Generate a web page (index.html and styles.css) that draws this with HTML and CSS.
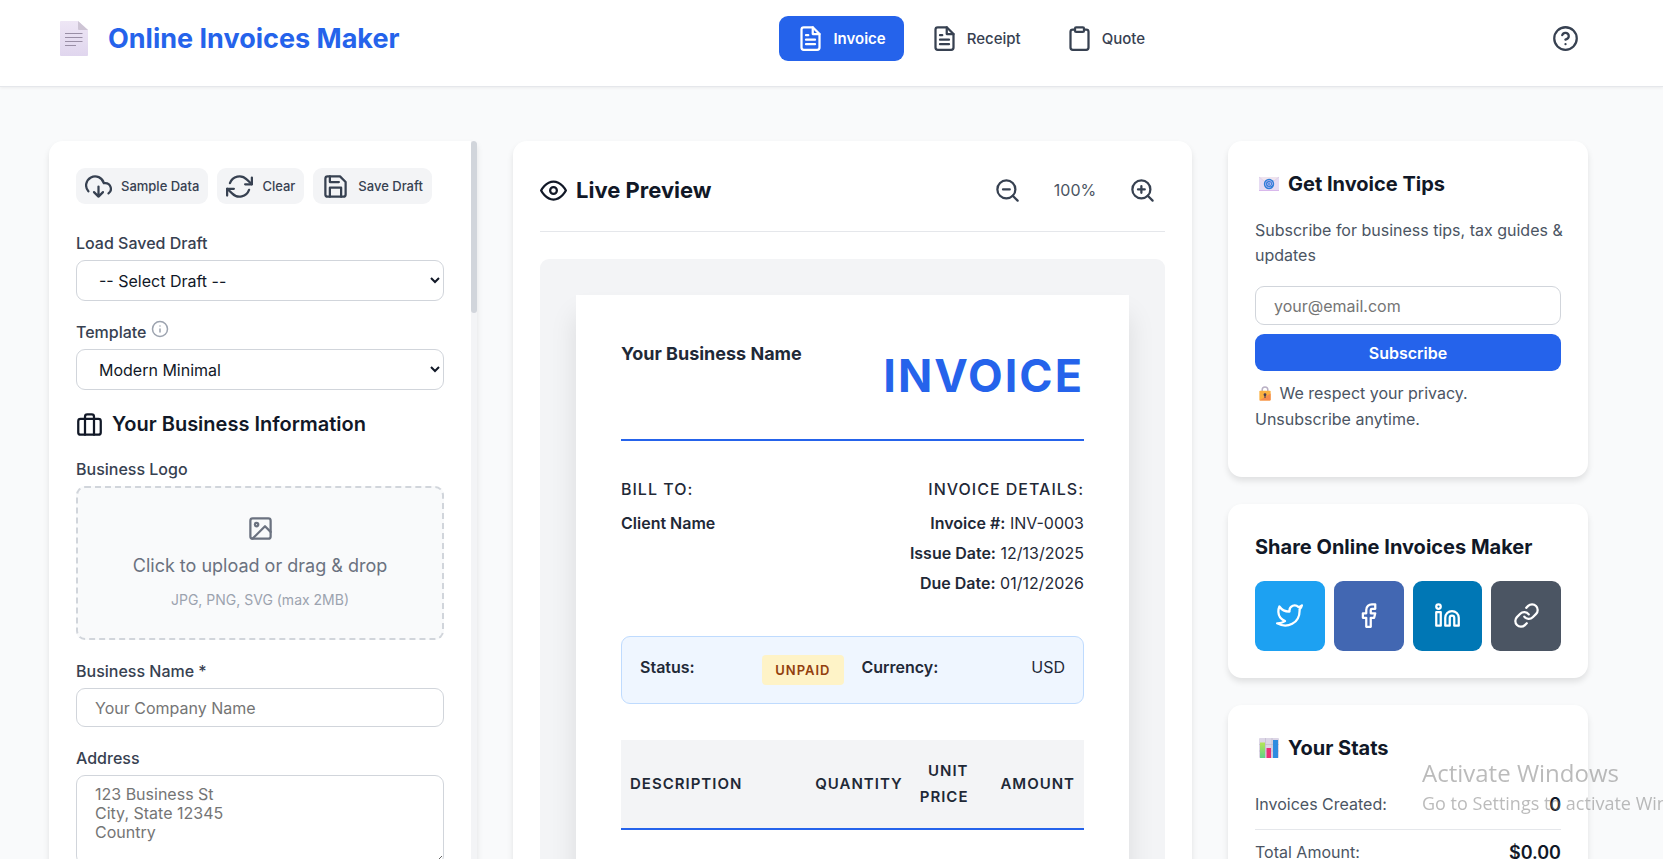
FILE: index.html
```html
<!DOCTYPE html>
<html lang="en">
<head>
    <meta charset="UTF-8">
    <meta name="viewport" content="width=device-width, initial-scale=1.0">
    <title>Online Invoices Maker</title>
    <link rel="stylesheet" href="styles.css">
</head>
<body>
    <header class="header">
        <div class="header-inner">
            <a class="logo" href="#">
                <svg class="logo-icon" viewBox="0 0 28 35" aria-hidden="true">
                    <defs>
                        <linearGradient id="page" x1="0" y1="0" x2="0" y2="1">
                            <stop offset="0" stop-color="#eee6f5"/>
                            <stop offset="1" stop-color="#e0d6ee"/>
                        </linearGradient>
                    </defs>
                    <path d="M1 0h17l10 9v25a1 1 0 0 1-1 1H1a1 1 0 0 1-1-1V1a1 1 0 0 1 1-1z" fill="url(#page)"/>
                    <path d="M18 0l10 9h-9a1 1 0 0 1-1-1z" fill="#cdc4d4"/>
                    <path d="M5 12.5h17.500M5 16.500h17.500M5 20.500h17.500M5 24.500h11" stroke="#9a8fa6" stroke-width="1.200" fill="none"/>
                </svg>
                <span>Online Invoices Maker</span>
            </a>
            <nav class="nav">
                <button class="nav-btn active" type="button">
                    <svg class="icon" viewBox="0 0 24 24"><path d="M14 2H6a2 2 0 0 0-2 2v16a2 2 0 0 0 2 2h12a2 2 0 0 0 2-2V8z"/><path d="M14 2v6h6M16 13H8M16 17H8M10 9H8"/></svg>
                    Invoice
                </button>
                <button class="nav-btn" type="button">
                    <svg class="icon" viewBox="0 0 24 24"><path d="M14 2H6a2 2 0 0 0-2 2v16a2 2 0 0 0 2 2h12a2 2 0 0 0 2-2V8z"/><path d="M14 2v6h6M16 13H8M16 17H8M10 9H8"/></svg>
                    Receipt
                </button>
                <button class="nav-btn" type="button">
                    <svg class="icon" viewBox="0 0 24 24"><path d="M16 4h2a2 2 0 0 1 2 2v14a2 2 0 0 1-2 2H6a2 2 0 0 1-2-2V6a2 2 0 0 1 2-2h2"/><rect x="8" y="2" width="8" height="4" rx="1"/></svg>
                    Quote
                </button>
            </nav>
            <button class="icon-btn" type="button" aria-label="Help">
                <svg class="icon" viewBox="0 0 24 24"><circle cx="12" cy="12" r="10"/><path d="M9.090 9a3 3 0 0 1 5.830 1c0 2-3 3-3 3M12 17h.01"/></svg>
            </button>
        </div>
    </header>

    <main class="layout">
        <!-- Form -->
        <section class="panel form-panel">
            <div class="form-scroll">
                <div class="actions">
                    <button class="btn-small" type="button">
                        <svg class="icon" viewBox="0 0 24 24"><path d="M8 17l4 4 4-4M12 12v9"/><path d="M20.880 18.090A5 5 0 0 0 18 9h-1.260A8 8 0 1 0 3 16.290"/></svg>
                        Sample Data
                    </button>
                    <button class="btn-small" type="button">
                        <svg class="icon" viewBox="0 0 24 24"><path d="M23 4v6h-6M1 20v-6h6"/><path d="M3.510 9a9 9 0 0 1 14.850-3.360L23 10M1 14l4.640 4.360A9 9 0 0 0 20.490 15"/></svg>
                        Clear
                    </button>
                    <button class="btn-small" type="button">
                        <svg class="icon" viewBox="0 0 24 24"><path d="M19 21H5a2 2 0 0 1-2-2V5a2 2 0 0 1 2-2h11l5 5v11a2 2 0 0 1-2 2z"/><path d="M17 21v-8H7v8M7 3v5h8"/></svg>
                        Save Draft
                    </button>
                </div>

                <div class="form-group">
                    <label for="draft">Load Saved Draft</label>
                    <select id="draft"><option>-- Select Draft --</option></select>
                </div>
                <div class="form-group">
                    <label for="template">Template
                        <svg class="info-icon" viewBox="0 0 24 24"><circle cx="12" cy="12" r="10"/><path d="M12 16v-4M12 8h.01"/></svg>
                    </label>
                    <select id="template"><option>Modern Minimal</option></select>
                </div>

                <h2 class="section-title">
                    <svg class="icon" viewBox="0 0 24 24"><rect x="2" y="7" width="20" height="14" rx="2"/><path d="M16 21V5a2 2 0 0 0-2-2h-4a2 2 0 0 0-2 2v16"/></svg>
                    Your Business Information
                </h2>

                <div class="form-group">
                    <label for="logo">Business Logo</label>
                    <div class="upload">
                        <input class="upload-input" type="file" id="logo" accept="image/*">
                        <svg class="icon" viewBox="0 0 24 24"><rect x="3" y="3" width="18" height="18" rx="2"/><circle cx="8.500" cy="8.500" r="1.500"/><path d="M21 15l-5-5L5 21"/></svg>
                        <p class="upload-text">Click to upload or drag &amp; drop</p>
                        <span class="upload-hint">JPG, PNG, SVG (max 2MB)</span>
                    </div>
                </div>
                <div class="form-group">
                    <label for="name">Business Name *</label>
                    <input type="text" id="name" placeholder="Your Company Name">
                </div>
                <div class="form-group">
                    <label for="address">Address</label>
                    <textarea id="address" placeholder="123 Business St&#10;City, State 12345&#10;Country"></textarea>
                </div>
            </div>
            <div class="scroll-track"><div class="scroll-thumb"></div></div>
        </section>

        <!-- Preview -->
        <section class="panel preview-panel">
            <div class="preview-header">
                <h2 class="preview-title">
                    <svg class="icon" viewBox="0 0 24 24"><path d="M1 12s4-8 11-8 11 8 11 8-4 8-11 8-11-8-11-8z"/><circle cx="12" cy="12" r="3"/></svg>
                    Live Preview
                </h2>
                <div class="zoom-controls">
                    <button class="icon-btn" type="button" aria-label="Zoom out">
                        <svg class="icon" viewBox="0 0 24 24"><circle cx="11" cy="11" r="8"/><path d="M21 21l-4.350-4.350M8 11h6"/></svg>
                    </button>
                    <span class="zoom-level">100%</span>
                    <button class="icon-btn" type="button" aria-label="Zoom in">
                        <svg class="icon" viewBox="0 0 24 24"><circle cx="11" cy="11" r="8"/><path d="M21 21l-4.350-4.350M11 8v6M8 11h6"/></svg>
                    </button>
                </div>
            </div>
            <div class="preview-area">
                <article class="invoice">
                    <div class="invoice-head">
                        <h3 class="business-name">Your Business Name</h3>
                        <div class="doc-title">INVOICE</div>
                    </div>
                    <div class="invoice-meta">
                        <div>
                            <h4>BILL TO:</h4>
                            <p><strong>Client Name</strong></p>
                        </div>
                        <div class="details">
                            <h4>INVOICE DETAILS:</h4>
                            <p><strong>Invoice #:</strong> INV-0003</p>
                            <p><strong>Issue Date:</strong> 12/13/2025</p>
                            <p><strong>Due Date:</strong> 01/12/2026</p>
                        </div>
                    </div>
                    <div class="status-box">
                        <div class="status-item"><strong>Status:</strong><span class="badge">UNPAID</span></div>
                        <div class="status-item"><strong>Currency:</strong><span>USD</span></div>
                    </div>
                    <table class="items">
                        <thead>
                            <tr>
                                <th class="col-desc">DESCRIPTION</th>
                                <th class="col-qty">QUANTITY</th>
                                <th class="col-price">UNIT PRICE</th>
                                <th class="col-amount">AMOUNT</th>
                            </tr>
                        </thead>
                    </table>
                </article>
            </div>
        </section>

        <!-- Sidebar -->
        <aside class="sidebar">
            <section class="panel card newsletter">
                <h3 class="card-title">
                    <svg class="emoji" viewBox="0 0 20 20" aria-hidden="true">
                        <rect x="0" y="3" width="20" height="14" fill="#e6dcf3"/>
                        <path d="M0 3l10 8 10-8" fill="#efe4ee" stroke="#d7c8e4" stroke-width=".6"/>
                        <path d="M0 17h20v-1H0z" fill="#d9b8ec"/>
                        <circle cx="10" cy="10" r="5.200" fill="#2f7fd8"/>
                        <circle cx="10" cy="10" r="1.400" fill="none" stroke="#b9b6f0" stroke-width=".9"/>
                        <path d="M11.500 8.500v2c0 1.500 2 1.200 2-.5a3.500 3.500 0 1 0-1.700 3" fill="none" stroke="#b9b6f0" stroke-width=".9"/>
                    </svg>
                    Get Invoice Tips
                </h3>
                <p class="card-text">Subscribe for business tips, tax guides &amp;<br>updates</p>
                <form class="newsletter-form">
                    <input type="email" placeholder="your@email.com" aria-label="Email">
                    <button class="btn-primary" type="button">Subscribe</button>
                </form>
                <p class="privacy">
                    <svg class="emoji-small" viewBox="0 0 12 16" aria-hidden="true">
                        <path d="M3 6V4a3 3 0 0 1 6 0v2" fill="none" stroke="#b9b0c4" stroke-width="1.600"/>
                        <rect x="0" y="5" width="12" height="10.500" rx=".8" fill="#fbb040"/>
                        <path d="M0 15.500L12 8v6.700a.8.8 0 0 1-.8.8z" fill="#f68b4e"/>
                        <circle cx="6" cy="9.300" r="1.500" fill="#4a3b52"/>
                        <path d="M5.400 9.500h1.200v3.300H5.400z" fill="#4a3b52"/>
                    </svg>
                    We respect your privacy. Unsubscribe anytime.
                </p>
            </section>

            <section class="panel card">
                <h3 class="card-title">Share Online Invoices Maker</h3>
                <div class="share">
                    <button class="share-btn twitter" type="button" aria-label="Twitter">
                        <svg class="icon" viewBox="0 0 24 24"><path d="M23 3a10.900 10.900 0 0 1-3.140 1.530 4.480 4.480 0 0 0-7.860 3v1A10.660 10.660 0 0 1 3 4s-4 9 5 13a11.640 11.640 0 0 1-7 2c9 5 20 0 20-11.500a4.500 4.500 0 0 0-.08-.83A7.720 7.720 0 0 0 23 3z"/></svg>
                    </button>
                    <button class="share-btn facebook" type="button" aria-label="Facebook">
                        <svg class="icon" viewBox="0 0 24 24"><path d="M18 2h-3a5 5 0 0 0-5 5v3H7v4h3v8h4v-8h3l1-4h-4V7a1 1 0 0 1 1-1h3z"/></svg>
                    </button>
                    <button class="share-btn linkedin" type="button" aria-label="LinkedIn">
                        <svg class="icon" viewBox="0 0 24 24"><path d="M16 8a6 6 0 0 1 6 6v7h-4v-7a2 2 0 0 0-4 0v7h-4v-7a6 6 0 0 1 6-6z"/><rect x="2" y="9" width="4" height="12"/><circle cx="4" cy="4" r="2"/></svg>
                    </button>
                    <button class="share-btn copy" type="button" aria-label="Copy link">
                        <svg class="icon" viewBox="0 0 24 24"><path d="M10 13a5 5 0 0 0 7.540.54l3-3a5 5 0 0 0-7.070-7.070l-1.720 1.710"/><path d="M14 11a5 5 0 0 0-7.540-.54l-3 3a5 5 0 0 0 7.070 7.070l1.710-1.710"/></svg>
                    </button>
                </div>
            </section>

            <section class="panel card stats">
                <h3 class="card-title">
                    <svg class="emoji" viewBox="0 0 20 20" aria-hidden="true">
                        <defs>
                            <linearGradient id="green" x1="0" y1="0" x2="0" y2="1">
                                <stop offset="0" stop-color="#b5e655"/>
                                <stop offset="1" stop-color="#5fd08a"/>
                            </linearGradient>
                        </defs>
                        <rect width="20" height="20" rx="1" fill="#dcd6e6"/>
                        <path d="M6.500 0v20M13 0v20M0 6.500h20M0 13h20" stroke="#bdb5ca" stroke-width=".6"/>
                        <rect x="1" y="4.500" width="5" height="15.500" fill="url(#green)"/>
                        <rect x="7.500" y="10" width="4.500" height="10" fill="#ea2f74"/>
                        <rect x="14" y="2" width="5" height="18" fill="#2f8be0"/>
                    </svg>
                    Your Stats
                </h3>
                <dl class="stat-list">
                    <div class="stat"><dt>Invoices Created:</dt><dd>0</dd></div>
                    <div class="stat"><dt>Total Amount:</dt><dd>$0.00</dd></div>
                </dl>
            </section>
        </aside>
    </main>

    <div class="watermark">
        <div class="watermark-title">Activate Windows</div>
        <div class="watermark-text">Go to Settings to activate Windows.</div>
    </div>
</body>
</html>
```

FILE: styles.css
```css
* {
    box-sizing: border-box;
    margin: 0;
    padding: 0;
}
body {
    background: #f9fafb;
    color: #111827;
    font-family: 'Inter', sans-serif;
    font-size: 18px;
    line-height: 1.6;
    height: 100vh;
    overflow: hidden;
}
button, input, select, textarea {
    font-family: inherit;
    font-size: 16px;
}
button {
    border: none;
    background: none;
    cursor: pointer;
}
.icon {
    width: 27px;
    height: 27px;
    flex-shrink: 0;
    fill: none;
    stroke: currentColor;
    stroke-width: 2;
    stroke-linecap: round;
    stroke-linejoin: round;
}

/* Header */
.header {
    background: #ffffff;
    border-bottom: 1px solid #e5e7eb;
    box-shadow: 0 1px 3px rgba(0, 0, 0, 0.06);
    padding: 16px 75px 25px 49px;
}
.header-inner {
    display: flex;
    align-items: center;
    justify-content: space-between;
}
.logo {
    display: flex;
    align-items: center;
    gap: 20px;
    padding-left: 11px;
    color: #2563eb;
    font-size: 27px;
    font-weight: 700;
    line-height: 44px;
    text-decoration: none;
}
.logo-icon {
    width: 28px;
    height: 35px;
}
.nav {
    display: flex;
    gap: 9px;
}
.nav-btn {
    display: flex;
    align-items: center;
    gap: 9px;
    padding: 9px 18px;
    border-radius: 9px;
    color: #374151;
    font-size: 15px;
    font-weight: 500;
}
.nav-btn.active {
    background: #2563eb;
    color: #ffffff;
    font-weight: 600;
}
.icon-btn {
    display: flex;
    padding: 9px;
    color: #374151;
}

/* Layout */
.layout {
    display: grid;
    grid-template-columns: 428px minmax(0, 1fr) 360px;
    gap: 36px;
    align-items: start;
    padding: 54px 75px 54px 49px;
}
.panel {
    background: #ffffff;
    border-radius: 14px;
    box-shadow: 0 4px 6px rgba(0, 0, 0, 0.1);
    padding: 27px;
}

/* Form */
.form-panel {
    display: flex;
    padding: 0;
    height: calc(100vh - 100px);
    border-radius: 14px 3px 3px 14px;
    overflow: hidden;
}
.form-scroll {
    flex: 1;
    min-width: 0;
    padding: 27px;
    overflow: hidden;
}
.scroll-track {
    width: 6px;
    background: #f3f4f6;
}
.scroll-thumb {
    height: 172px;
    background: #d1d5db;
    border-radius: 3px;
}
.actions {
    display: flex;
    gap: 9px;
    margin-bottom: 26px;
}
.btn-small {
    display: flex;
    align-items: center;
    gap: 9px;
    height: 36px;
    padding: 0 9px;
    background: #f3f4f6;
    border-radius: 9px;
    color: #374151;
    font-size: 13px;
    font-weight: 500;
    white-space: nowrap;
}
.form-group {
    margin-bottom: 18px;
}
.form-group label {
    display: block;
    margin-bottom: 4px;
    color: #374151;
    font-size: 16px;
    font-weight: 500;
    line-height: 26px;
}
.info-icon {
    width: 18px;
    height: 18px;
    fill: none;
    stroke: #9ca3af;
    stroke-width: 2;
    stroke-linecap: round;
}
input, select, textarea {
    display: block;
    width: 100%;
    padding: 9px 18px;
    background: #ffffff;
    border: 1px solid #d1d5db;
    border-radius: 9px;
    color: #111827;
}
select {
    height: 41px;
}
input {
    height: 39px;
}
textarea {
    height: 90px;
    line-height: 19px;
    resize: vertical;
}
.section-title {
    display: flex;
    align-items: center;
    gap: 9px;
    margin-bottom: 16px;
    font-size: 20px;
    font-weight: 600;
    line-height: 32px;
}
.upload {
    position: relative;
    display: flex;
    flex-direction: column;
    align-items: center;
    padding: 27px;
    background: #f9fafb;
    border: 2px dashed #d1d5db;
    border-radius: 9px;
    color: #6b7280;
}
.upload-input {
    position: absolute;
    inset: 0;
    height: 100%;
    opacity: 0;
    cursor: pointer;
}
.upload-text {
    margin: 9px 0;
    line-height: 29px;
}
.upload-hint {
    color: #9ca3af;
    font-size: 14px;
    line-height: 22px;
}

/* Preview */
.preview-panel {
    padding-bottom: 60px;
}
.preview-header {
    display: flex;
    align-items: center;
    justify-content: space-between;
    padding-bottom: 18px;
    margin-bottom: 27px;
    border-bottom: 1px solid #e5e7eb;
}
.preview-title {
    display: flex;
    align-items: center;
    gap: 9px;
    font-size: 22px;
    font-weight: 700;
}
.zoom-controls {
    display: flex;
    align-items: center;
    gap: 9px;
}
.zoom-level {
    min-width: 72px;
    color: #4b5563;
    font-size: 16px;
    text-align: center;
}
.preview-area {
    padding: 36px;
    background: #f3f4f6;
    border-radius: 9px;
}
.invoice {
    min-height: 900px;
    padding: 45px;
    background: #ffffff;
    box-shadow: 0 20px 25px rgba(0, 0, 0, 0.1);
    color: #1f2937;
    font-size: 16px;
}
.invoice-head {
    display: flex;
    align-items: flex-start;
    justify-content: space-between;
    padding-bottom: 27px;
    margin-bottom: 36px;
    border-bottom: 2px solid #2563eb;
}
.business-name {
    font-size: 18px;
    font-weight: 700;
}
.doc-title {
    color: #2563eb;
    font-size: 45px;
    font-weight: 700;
    letter-spacing: 2px;
}
.invoice-meta {
    display: flex;
    justify-content: space-between;
    margin-bottom: 36px;
}
.invoice-meta h4 {
    margin-bottom: 8px;
    font-size: 16px;
    font-weight: 500;
    letter-spacing: 1px;
    line-height: 25px;
}
.invoice-meta p {
    margin-bottom: 4px;
    line-height: 26px;
}
.invoice strong {
    font-weight: 600;
}
.details {
    text-align: right;
}
.status-box {
    display: grid;
    grid-template-columns: 1fr 1fr;
    gap: 18px;
    padding: 18px;
    margin-bottom: 36px;
    background: #eff6ff;
    border: 1px solid #bfdbfe;
    border-radius: 9px;
}
.status-item {
    display: flex;
    align-items: flex-start;
    justify-content: space-between;
    line-height: 25px;
}
.badge {
    padding: 4px 13px;
    background: #fef3c7;
    border-radius: 4px;
    color: #92400e;
    font-size: 13px;
    font-weight: 600;
    letter-spacing: 1px;
    line-height: 22px;
}
.items {
    width: 100%;
    border-collapse: collapse;
    table-layout: fixed;
}
.items thead {
    background: #f3f4f6;
    border-bottom: 2px solid #2563eb;
}
.items th {
    padding: 18px 9px;
    font-size: 15px;
    font-weight: 600;
    letter-spacing: 1px;
    line-height: 26px;
    text-align: right;
}
.items .col-desc {
    width: 40%;
    text-align: left;
}
.items .col-qty {
    width: 22%;
    text-align: center;
}
.items .col-price {
    width: 15%;
}

/* Sidebar */
.sidebar {
    display: flex;
    flex-direction: column;
    gap: 27px;
}
.card-title {
    display: flex;
    align-items: center;
    gap: 9px;
    margin-bottom: 18px;
    font-size: 20px;
    font-weight: 700;
    line-height: 32px;
}
.emoji {
    width: 20px;
    height: 20px;
    margin-left: 4px;
}
.emoji-small {
    width: 12px;
    height: 15px;
    margin: 0 4px;
    vertical-align: -2px;
}
.card-text, .privacy {
    color: #4b5563;
    font-size: 16px;
}
.card-text {
    margin-bottom: 18px;
    line-height: 25px;
    white-space: nowrap;
}
.privacy {
    line-height: 26px;
}
.newsletter-form {
    display: flex;
    flex-direction: column;
    gap: 9px;
    margin-bottom: 9px;
}
.newsletter {
    padding-bottom: 45px;
}
.btn-primary {
    height: 37px;
    background: #2563eb;
    border-radius: 9px;
    color: #ffffff;
    font-weight: 600;
}
.share {
    display: grid;
    grid-template-columns: repeat(4, 1fr);
    gap: 9px;
}
.share-btn {
    display: flex;
    align-items: center;
    justify-content: center;
    aspect-ratio: 1;
    border-radius: 9px;
    color: #ffffff;
}
.twitter {
    background: #1da1f2;
}
.facebook {
    background: #4267b2;
}
.linkedin {
    background: #0077b5;
}
.copy {
    background: #4b5563;
}
.stat {
    display: flex;
    align-items: center;
    justify-content: space-between;
    padding: 9px 0;
    border-bottom: 1px solid #e5e7eb;
}
.stat:last-child {
    border-bottom: none;
}
.stat dt {
    color: #4b5563;
    font-size: 16px;
}
.stat dd {
    font-size: 18px;
    font-weight: 600;
}

/* Activation notice over the page */
.watermark {
    position: fixed;
    right: 0;
    bottom: 42px;
    width: 241px;
    overflow: hidden;
    color: rgba(120, 120, 120, 0.5);
    font-family: 'Open Sans', sans-serif;
    white-space: nowrap;
    pointer-events: none;
}
.watermark-title {
    font-size: 24px;
    line-height: 32px;
}
.watermark-text {
    font-size: 18px;
    line-height: 28px;
}
```
